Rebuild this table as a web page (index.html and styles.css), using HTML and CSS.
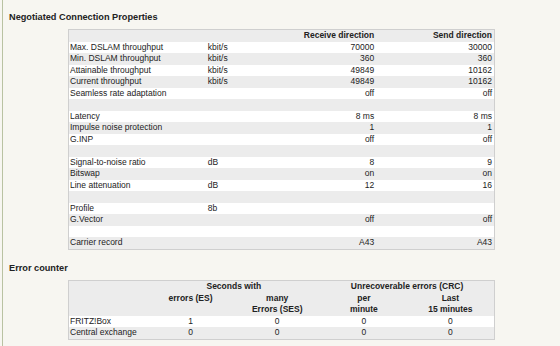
FILE: index.html
```html
<!DOCTYPE html>
<html>
<head>
<meta charset="utf-8">
<link rel="stylesheet" href="styles.css">
</head>
<body>
<div class="page">
  <h2 class="title">Negotiated Connection Properties</h2>
  <table class="grid props">
    <colgroup><col class="c1"><col class="c2"><col class="c3"><col class="c4"></colgroup>
    <tr class="head"><th></th><th></th><th class="r">Receive direction</th><th class="r">Send direction</th></tr>
    <tr><td>Max. DSLAM throughput</td><td>kbit/s</td><td class="r">70000</td><td class="r">30000</td></tr>
    <tr><td>Min. DSLAM throughput</td><td>kbit/s</td><td class="r">360</td><td class="r">360</td></tr>
    <tr><td>Attainable throughput</td><td>kbit/s</td><td class="r">49849</td><td class="r">10162</td></tr>
    <tr><td>Current throughput</td><td>kbit/s</td><td class="r">49849</td><td class="r">10162</td></tr>
    <tr><td>Seamless rate adaptation</td><td></td><td class="r">off</td><td class="r">off</td></tr>
    <tr><td>&nbsp;</td><td></td><td></td><td></td></tr>
    <tr><td>Latency</td><td></td><td class="r">8 ms</td><td class="r">8 ms</td></tr>
    <tr><td>Impulse noise protection</td><td></td><td class="r">1</td><td class="r">1</td></tr>
    <tr><td>G.INP</td><td></td><td class="r">off</td><td class="r">off</td></tr>
    <tr><td>&nbsp;</td><td></td><td></td><td></td></tr>
    <tr><td>Signal-to-noise ratio</td><td>dB</td><td class="r">8</td><td class="r">9</td></tr>
    <tr><td>Bitswap</td><td></td><td class="r">on</td><td class="r">on</td></tr>
    <tr><td>Line attenuation</td><td>dB</td><td class="r">12</td><td class="r">16</td></tr>
    <tr><td>&nbsp;</td><td></td><td></td><td></td></tr>
    <tr><td>Profile</td><td>8b</td><td></td><td></td></tr>
    <tr><td>G.Vector</td><td></td><td class="r">off</td><td class="r">off</td></tr>
    <tr><td>&nbsp;</td><td></td><td></td><td></td></tr>
    <tr><td>Carrier record</td><td></td><td class="r">A43</td><td class="r">A43</td></tr>
  </table>

  <h2 class="title second">Error counter</h2>
  <table class="grid errors">
    <colgroup><col class="e1"><col class="e2"><col class="e2"><col class="e2"><col class="e2"></colgroup>
    <tr class="head"><th></th><th colspan="2" class="c">Seconds with</th><th colspan="2" class="c">Unrecoverable errors (CRC)</th></tr>
    <tr class="head top"><th></th><th class="c">errors (ES)</th><th class="c">many<br>Errors (SES)</th><th class="c">per<br>minute</th><th class="c">Last<br>15 minutes</th></tr>
    <tr><td>FRITZ!Box</td><td class="c">1</td><td class="c">0</td><td class="c">0</td><td class="c">0</td></tr>
    <tr><td>Central exchange</td><td class="c">0</td><td class="c">0</td><td class="c">0</td><td class="c">0</td></tr>
  </table>
</div>
</body>
</html>
```

FILE: styles.css
```css
html, body {
  margin: 0;
  padding: 0;
  background: #f7f6f1;
}
body {
  font-family: "Liberation Sans", Arial, Helvetica, sans-serif;
  color: #222;
}
.page {
  margin-left: 2px;
  border-left: 1px solid #b9c2a2;
  padding-left: 6px;
  height: 346px;
  box-sizing: border-box;
  overflow: hidden;
}
.title {
  font-size: 9.2px;
  font-weight: bold;
  line-height: 12px;
  margin: 11px 0 0 0;
}
.title.second {
  margin-top: 12px;
}
.grid {
  border-collapse: collapse;
  table-layout: fixed;
  border: 1px solid #cfcfcf;
  margin: 6px 0 0 59px;
  width: 427px;
  font-size: 8.5px;
  background: #fff;
}
.errors {
  margin-top: 6.5px;
}
.grid td, .grid th {
  padding: 0 2px 0 1px;
  line-height: 11.5px;
  height: 11.5px;
  white-space: nowrap;
  vertical-align: top;
  text-align: left;
}
.grid th {
  font-weight: bold;
}
.grid tr:nth-child(even) {
  background: #fff;
}
.grid tr:nth-child(odd) {
  background: #ececec;
}
.grid tr.head {
  background: #ececec;
}
.errors tr:nth-child(3) { background: #fff; }
.errors tr:nth-child(4) { background: #ececec; }
.grid .r { text-align: right; }
.grid .c { text-align: center; }
.c1 { width: 138px; }
.c2 { width: 53px; }
.c3 { width: 116px; }
.c4 { width: 118px; }
.e1 { width: 79px; }
.e2 { width: 86.5px; }
```
